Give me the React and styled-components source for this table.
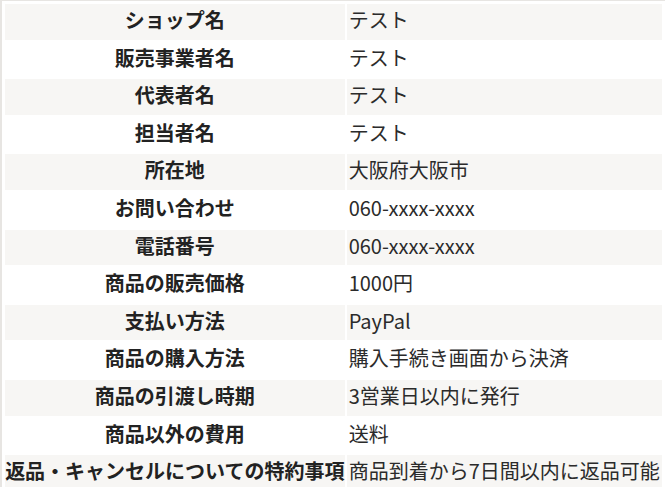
import React from 'react'
import styled, {createGlobalStyle} from 'styled-components'

const rows = [
    ['ショップ名', 'テスト'],
    ['販売事業者名', 'テスト'],
    ['代表者名', 'テスト'],
    ['担当者名', 'テスト'],
    ['所在地', '大阪府大阪市'],
    ['お問い合わせ', '060-xxxx-xxxx'],
    ['電話番号', '060-xxxx-xxxx'],
    ['商品の販売価格', '1000円'],
    ['支払い方法', 'PayPal'],
    ['商品の購入方法', '購入手続き画面から決済'],
    ['商品の引渡し時期', '3営業日以内に発行'],
    ['商品以外の費用', '送料'],
    ['返品・キャンセルについての特約事項', '商品到着から7日間以内に返品可能'],
]

function App() {
    return (
        <>
            <GlobalStyle/>
            <Table>
                <tbody>
                    {rows.map(([label, value], i) => (
                        <Row key={label} shaded={i % 2 === 0}>
                            <Head>{label}</Head>
                            <Cell>{value}</Cell>
                        </Row>
                    ))}
                </tbody>
            </Table>
        </>
    )
}

export default App

const GlobalStyle = createGlobalStyle`
    body{
        margin:0;
        background:#ffffff;
        font-family:"Noto Sans CJK JP", "Noto Sans", sans-serif;
        overflow:hidden;
    }
`
const Table = styled.table`
    width:665px;
    border-collapse:separate;
    border-spacing:2px;
    border-top:1px solid #e7e5e2;
    border-left:2px solid #e7e5e2;
    padding:1px;
    font-size:20px;
`
const Row = styled.tr`
    td, th{
        background:${props => props.shaded ? '#f7f6f4' : '#ffffff'};
    }
`
const Head = styled.th`
    padding:4px 0 8px;
    line-height:23.6px;
    font-weight:700;
    color:#222222;
    text-align:center;
    white-space:nowrap;
`
const Cell = styled.td`
    padding:4px 2px 8px;
    line-height:23.6px;
    color:#2b2b2b;
    text-align:left;
    white-space:nowrap;
`
